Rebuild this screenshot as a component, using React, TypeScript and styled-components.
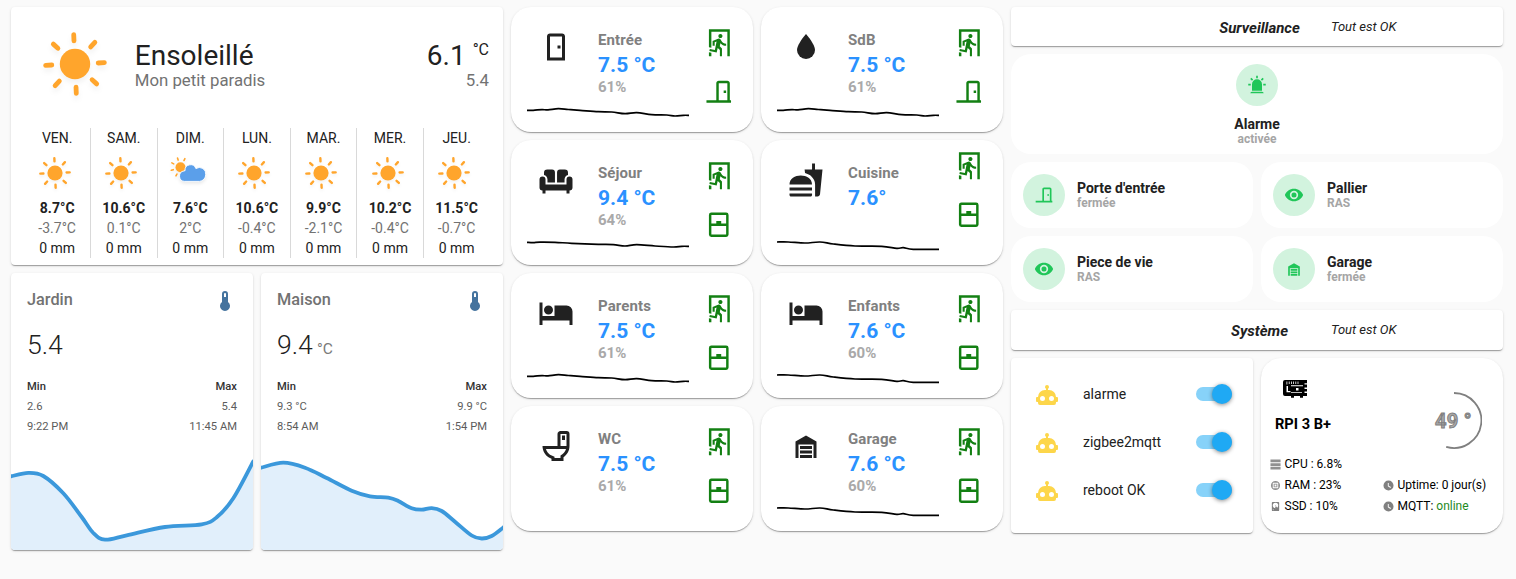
import React from "react";
import styled, { createGlobalStyle, css } from "styled-components";

const GlobalStyle = createGlobalStyle`
  * { box-sizing: border-box; }
  body {
    margin: 0;
    background: #fafafa;
    color: #212121;
    font-family: Roboto, "Noto Sans", sans-serif;
    font-size: 14px;
    -webkit-font-smoothing: antialiased;
  }
`;

/* ---------- icons ---------- */

const paths = {
  door: "M8,3C6.89,3 6,3.89 6,5V21H18V5C18,3.89 17.11,3 16,3H8M8,5H16V19H8V5M13,11V13H15V11H13Z",
  water: "M12,20A6,6 0 0,1 6,14C6,10 12,3.25 12,3.25C12,3.25 18,10 18,14A6,6 0 0,1 12,20Z",
  sofa: "M6.2,5H9.2A2,2 0 0,1 11.3,7V13.6H6.3V11.5A3.2,3.2 0 0,0 4,8.7V7.2A2.2,2.2 0 0,1 6.2,5M14.8,5H17.8A2.2,2.2 0 0,1 20,7.2V8.7A3.2,3.2 0 0,0 17.7,11.5V13.6H12.7V7A2,2 0 0,1 14.8,5M3,9.7A2,2 0 0,1 5,11.7V15H19V11.7A2,2 0 0,1 23,11.7V17A2,2 0 0,1 21,19V21H19V19H5V21H3V19A2,2 0 0,1 1,17V11.7A2,2 0 0,1 3,9.7Z",
  food: "M18.06 22.99h1.66c.84 0 1.53-.64 1.63-1.46L23 5.05h-5V1h-1.97v4.05h-4.97l.3 2.34c1.71.47 3.31 1.32 4.27 2.26 1.44 1.42 2.43 2.89 2.43 5.29v8.05zM1 21.99V21h15.03v.99c0 .55-.45 1-1.01 1H2.01c-.56 0-1.01-.45-1.01-1zm15.03-7c0-8-15.03-8-15.03 0h15.03zM1.02 17h15v2h-15z",
  bed: "M19,7H11V14H3V5H1V20H3V17H21V20H23V11A4,4 0 0,0 19,7M7,13A3,3 0 0,0 10,10A3,3 0 0,0 7,7A3,3 0 0,0 4,10A3,3 0 0,0 7,13Z",
  toilet: "M9,22H17V19.5C19.41,17.87 21,15.12 21,12V4A2,2 0 0,0 19,2H15C13.89,2 13,2.9 13,4V12H3C3,15.09 4.6,17.9 7,19.5L9,20.5V22M15,4H19V12H15V4M16,5V8H18V5H16M5.3,14H18.7C18.1,15.9 16.8,17.4 15,18.3V20H11V19.2L8,17.8C6.7,16.9 5.8,15.6 5.3,14Z",
  garage: "M19,20H17V11H7V20H5V9L12,5L19,9V20M8,12H16V14H8V12M8,15H16V17H8V15M16,18V20H8V18H16Z",
  exitRun: "M13.34,8.17C12.41,8.17 11.65,7.4 11.65,6.47A1.69,1.69 0 0,1 13.34,4.78C14.28,4.78 15.04,5.54 15.04,6.47C15.04,7.4 14.28,8.17 13.34,8.17M10.3,19.93L4.37,18.75L4.71,17.05L8.86,17.9L10.21,11.04L8.69,11.64V14.5H7V10.54L11.4,8.67L12.07,8.59C12.67,8.59 13.17,8.93 13.5,9.44L14.36,10.79C15.04,12 16.39,12.82 18,12.82V14.5C16.14,14.5 14.44,13.67 13.34,12.4L12.84,14.94L14.61,16.63V23H12.92V17.9L11.14,16.21L10.3,19.93M21,23H19V3H6V16.11L4,15.69V1H21V23M6,23H4V19.78L6,20.2V23Z",
  doorClosed: "M16,11H18V13H16V11M12,3H19C20.11,3 21,3.89 21,5V19H22V21H2V19H10V5C10,3.89 10.89,3 12,3M12,5V19H19V5H12Z",
  windowClosed: "M6,11H10V9H14V11H18V4H6V11M18,13H6V20H18V13M6,2H18A2,2 0 0,1 20,4V20A2,2 0 0,1 18,22H6A2,2 0 0,1 4,20V4A2,2 0 0,1 6,2Z",
  thermometer: "M15,13V5A3,3 0 0,0 9,5V13A5,5 0 1,0 15,13M12,4A1,1 0 0,1 13,5V8H11V5A1,1 0 0,1 12,4Z",
  alarm: "M6,6.9L3.87,4.78L5.28,3.37L7.4,5.5L6,6.9M13,1V4H11V1H13M20.13,4.78L18,6.9L16.6,5.5L18.72,3.37L20.13,4.78M4.5,10.5V12.5H1.5V10.5H4.5M19.5,10.5H22.5V12.5H19.5V10.5M6,20H18A2,2 0 0,1 20,22H4A2,2 0 0,1 6,20M12,5A6,6 0 0,1 18,11V19H6V11A6,6 0 0,1 12,5Z",
  eye: "M12,9A3,3 0 0,0 9,12A3,3 0 0,0 12,15A3,3 0 0,0 15,12A3,3 0 0,0 12,9M12,17A5,5 0 0,1 7,12A5,5 0 0,1 12,7A5,5 0 0,1 17,12A5,5 0 0,1 12,17M12,4.5C7,4.5 2.73,7.61 1,12C2.73,16.39 7,19.5 12,19.5C17,19.5 21.27,16.39 23,12C21.27,7.61 17,4.5 12,4.5Z",
  robot: "M12,2A2,2 0 0,1 14,4C14,4.74 13.6,5.39 13,5.73V7H14A7,7 0 0,1 21,14H22A1,1 0 0,1 23,15V18A1,1 0 0,1 22,19H21V20A2,2 0 0,1 19,22H5A2,2 0 0,1 3,20V19H2A1,1 0 0,1 1,18V15A1,1 0 0,1 2,14H3A7,7 0 0,1 10,7H11V5.73C10.4,5.39 10,4.74 10,4A2,2 0 0,1 12,2M7.5,13A2.5,2.5 0 0,0 5,15.5A2.5,2.5 0 0,0 7.5,18A2.5,2.5 0 0,0 10,15.5A2.5,2.5 0 0,0 7.5,13M16.5,13A2.5,2.5 0 0,0 14,15.5A2.5,2.5 0 0,0 16.5,18A2.5,2.5 0 0,0 19,15.5A2.5,2.5 0 0,0 16.5,13Z",
  board: "M2,3H24V6.2H21.5V7.6H24V10.4H21.5V12H24V14.6H21.5V16H24V19H20V20.7H17V19H11V20.7H8V19H2A2,2 0 0,1 0,17V5A2,2 0 0,1 2,3M3.5,4.5V7.5H4.3V4.5H3.5M5.8,4.5V7H6.6V4.5H5.8M8,4.5V7H8.8V4.5H8M10.2,4.5V7H11V4.5H10.2M12.4,4.5V7H13.2V4.5H12.4M14.6,4.5V7H15.4V4.5H14.6M3.5,9V15.2H7.5V14H5V9H3.5M8,8.3V9.2H20V8.3H8M13,11V13.5H15.5V11H13M8,15.3V16H19V15.3H8Z",
  server: "M1,1H23V7H1V1M1,9H23V15H1V9M1,17H23V23H1V17Z",
  chip: "M12,2A10,10 0 1,0 22,12A10,10 0 0,0 12,2M7,6H17A1,1 0 0,1 18,7V17A1,1 0 0,1 17,18H7A1,1 0 0,1 6,17V7A1,1 0 0,1 7,6M8,8V16H16V8H8M10,10H14V14H10V10Z",
  harddisk: "M6,2H18A2,2 0 0,1 20,4V20A2,2 0 0,1 18,22H6A2,2 0 0,1 4,20V4A2,2 0 0,1 6,2M12,4A6,6 0 0,0 6,10C6,13.31 8.69,16 12.1,16L11.22,13.77C10.95,13.29 11.11,12.68 11.59,12.4L12.45,11.9C12.93,11.63 13.54,11.79 13.82,12.27L15.74,14.69C17.12,13.59 18,11.9 18,10A6,6 0 0,0 12,4M12,9A1,1 0 0,1 13,10A1,1 0 0,1 12,11A1,1 0 0,1 11,10A1,1 0 0,1 12,9M7,18A1,1 0 0,0 6,19A1,1 0 0,0 7,20A1,1 0 0,0 8,19A1,1 0 0,0 7,18Z",
  clock: "M12,1A11,11 0 0,0 1,12A11,11 0 0,0 12,23A11,11 0 0,0 23,12A11,11 0 0,0 12,1M16.2,17.2L10.5,13.5V6.5H12.5V12.5L17.5,15.5L16.2,17.2Z",
};

type IconName = keyof typeof paths;

const IconSvg = styled.svg<{ $size: number; $color?: string }>`
  display: block;
  flex: none;
  width: ${(p) => p.$size}px;
  height: ${(p) => p.$size}px;
  fill: ${(p) => p.$color ?? "currentColor"};
`;

const Icon = ({ name, size = 24, color }: { name: IconName; size?: number; color?: string }) => (
  <IconSvg viewBox="0 0 24 24" $size={size} $color={color}>
    <path fillRule={name === "board" ? "evenodd" : undefined} d={paths[name]} />
  </IconSvg>
);

/* ---------- surfaces ---------- */

const Page = styled.main`
  display: grid;
  grid-template-columns: 492px 492px 492px;
  column-gap: 8px;
  align-items: start;
  min-height: 100vh;
  padding: 7px 13px 0 11px;
`;

const Column = styled.div`
  display: flex;
  flex-direction: column;
  gap: 8px;
`;

const Pair = styled.div`
  display: grid;
  grid-template-columns: 242px 242px;
  gap: 8px;
`;

const Card = styled.section<{ $round?: boolean; $flat?: boolean }>`
  background: #fff;
  border-radius: ${(p) => (p.$round || p.$flat ? 20 : 4)}px;
  overflow: hidden;
  ${(p) =>
    !p.$flat &&
    css`
      box-shadow: 0 2px 1px -1px rgba(0, 0, 0, 0.2), 0 1px 1px 0 rgba(0, 0, 0, 0.14),
        0 1px 3px 0 rgba(0, 0, 0, 0.12);
    `}
`;

/* ---------- weather ---------- */

const WeatherCard = styled(Card)`
  height: 258px;
  padding: 0 12.6px 0 13.4px;
`;

const WeatherHead = styled.header`
  display: flex;
  height: 121px;
  padding: 25px 1.4px 0 18.4px;
`;

const WeatherTitle = styled.div`
  margin-left: 28px;
  flex: 1;
`;

const BigText = styled.div`
  font-size: 28px;
  line-height: 48px;
  display: flex;
  justify-content: flex-end;
`;

const Condition = styled(BigText)`
  justify-content: flex-start;
`;

const Unit = styled.span`
  font-size: 16px;
  line-height: 36px;
  margin-left: 7px;
`;

const SubText = styled.div`
  font-size: 16.8px;
  line-height: 0;
  color: #727272;
  text-align: right;
`;

const Place = styled(SubText)`
  text-align: left;
`;

const SunSvg = styled.svg<{ $size: number }>`
  display: block;
  flex: none;
  overflow: visible;
  width: ${(p) => p.$size}px;
  height: ${(p) => p.$size}px;
  filter: drop-shadow(0 ${(p) => p.$size / 16}px ${(p) => p.$size / 22}px rgba(0, 0, 0, 0.05));
`;

const Sun = ({ size }: { size: number }) => (
  <SunSvg viewBox="-32 -32 64 64" $size={size}>
    <circle r="15.2" fill="#ffa52c" />
    <g stroke="#ffa52c" strokeWidth="4.8" strokeLinecap="round" transform="rotate(-2.5)">
      {[0, 45, 90, 135, 180, 225, 270, 315].map((a) => (
        <line key={a} x1="0" y1="-29.4" x2="0" y2="-23.2" transform={`rotate(${a})`} />
      ))}
    </g>
  </SunSvg>
);

const CloudSvg = styled.svg`
  display: block;
  overflow: visible;
  width: 36px;
  height: 26px;
  filter: drop-shadow(0 2px 1.5px rgba(0, 0, 0, 0.08));
`;

const CloudySun = () => (
  <CloudSvg viewBox="0 0 36 26">
    <g transform="translate(10.5 10.3)">
      <circle r="5" fill="#ffa52c" />
      <g stroke="#ffa52c" strokeWidth="1.6" strokeLinecap="round">
        {[-152, -108, -63, -18, 27].map((a) => (
          <line key={a} x1="0" y1="-9.7" x2="0" y2="-7.6" transform={`rotate(${a})`} />
        ))}
      </g>
    </g>
    <path
      d="M14.2 24.4a5.3 5.3 0 0 1-.2-10.5 5 5 0 0 1 1-.1 5.6 5.6 0 0 1 10.9-2.2 6.3 6.3 0 0 1 9.8 6.1 6.7 6.7 0 0 1-6.2 6.7z"
      fill="#5b9fea"
      stroke="#fff"
      strokeWidth="0.9"
    />
  </CloudSvg>
);

const Forecast = styled.div`
  display: grid;
  grid-template-columns: repeat(7, 1fr);
  height: 130px;
`;

const Day = styled.div`
  display: flex;
  flex-direction: column;
  align-items: center;
  line-height: 20px;
  border-right: 1px solid #d9d9d9;
  &:last-child {
    border-color: transparent;
  }
`;

const DayIcon = styled.div`
  height: 50px;
  padding: 9px 5px 0 0;
`;

const High = styled.strong`
  font-weight: 700;
`;

const Low = styled.span`
  color: #727272;
`;

const days = [
  { day: "VEN.", high: "8.7°C", low: "-3.7°C" },
  { day: "SAM.", high: "10.6°C", low: "0.1°C" },
  { day: "DIM.", high: "7.6°C", low: "2°C", cloudy: true },
  { day: "LUN.", high: "10.6°C", low: "-0.4°C" },
  { day: "MAR.", high: "9.9°C", low: "-2.1°C" },
  { day: "MER.", high: "10.2°C", low: "-0.4°C" },
  { day: "JEU.", high: "11.5°C", low: "-0.7°C" },
];

const Weather = () => (
  <WeatherCard>
    <WeatherHead>
      <Sun size={64} />
      <WeatherTitle>
        <Condition>Ensoleillé</Condition>
        <Place>Mon petit paradis</Place>
      </WeatherTitle>
      <div>
        <BigText>
          6.1<Unit>°C</Unit>
        </BigText>
        <SubText>5.4</SubText>
      </div>
    </WeatherHead>
    <Forecast>
      {days.map((d) => (
        <Day key={d.day}>
          <span>{d.day}</span>
          <DayIcon>{d.cloudy ? <CloudySun /> : <Sun size={32} />}</DayIcon>
          <High>{d.high}</High>
          <Low>{d.low}</Low>
          <span>0 mm</span>
        </Day>
      ))}
    </Forecast>
  </WeatherCard>
);

/* ---------- graphs ---------- */

type Point = [number, number];

const smooth = (pts: Point[]) =>
  pts.reduce((d, p, i) => {
    if (i === 0) return `M${p[0]},${p[1]}`;
    const a = pts[i - 2] ?? pts[i - 1];
    const b = pts[i - 1];
    const c = pts[i + 1] ?? p;
    return `${d}C${b[0] + (p[0] - a[0]) / 6},${b[1] + (p[1] - a[1]) / 6} ${p[0] - (c[0] - b[0]) / 6},${
      p[1] - (c[1] - b[1]) / 6
    } ${p[0]},${p[1]}`;
  }, "");

const GraphCard = styled(Card)`
  display: flex;
  flex-direction: column;
  height: 277px;
`;

const GraphHead = styled.header`
  display: flex;
  justify-content: space-between;
  padding: 16px 16px 0;
  height: 52px;
  font-size: 16.3px;
  font-weight: 500;
  line-height: 21px;
  color: #727272;
`;

const GraphValue = styled.div`
  padding-left: 16px;
  height: 52px;
  font-size: 26.6px;
  font-weight: 300;
  line-height: 40px;
`;

const GraphUnit = styled.span`
  margin-left: 4px;
  font-size: 15.5px;
  font-weight: 400;
  color: #7a7a7a;
`;

const Extremes = styled.div`
  display: flex;
  justify-content: space-between;
  padding: 0 16px;
  height: 73px;
  font-size: 11.2px;
  line-height: 20px;
  color: #5c5c5c;
`;

const Extreme = styled.div<{ $end?: boolean }>`
  display: flex;
  flex-direction: column;
  align-items: ${(p) => (p.$end ? "flex-end" : "flex-start")};
`;

const ExtremeLabel = styled.span`
  font-weight: 500;
  color: #333;
`;

const GraphSvg = styled.svg`
  display: block;
  width: 242px;
  height: 100px;
`;

type GraphProps = {
  name: string;
  value: string;
  unit?: string;
  min: [string, string];
  max: [string, string];
  points: Point[];
};

const Graph = ({ name, value, unit, min, max, points }: GraphProps) => (
  <GraphCard>
    <GraphHead>
      {name}
      <Icon name="thermometer" color="#44739e" />
    </GraphHead>
    <GraphValue>
      {value}
      {unit && <GraphUnit>{unit}</GraphUnit>}
    </GraphValue>
    <Extremes>
      <Extreme>
        <ExtremeLabel>Min</ExtremeLabel>
        <span>{min[0]}</span>
        <span>{min[1]}</span>
      </Extreme>
      <Extreme $end>
        <ExtremeLabel>Max</ExtremeLabel>
        <span>{max[0]}</span>
        <span>{max[1]}</span>
      </Extreme>
    </Extremes>
    <GraphSvg viewBox="0 0 242 100">
      <path d={`${smooth(points)}V100H0Z`} fill="#e1effb" />
      <path d={smooth(points)} fill="none" stroke="#3b98db" strokeWidth="3.8" strokeLinecap="square" />
    </GraphSvg>
  </GraphCard>
);

const jardin: Point[] = [
  [0, 26.3], [17.3, 22.9], [32.3, 26], [52.3, 43.3], [70.7, 67], [82.3, 83], [94, 89.7],
  [115.7, 85.3], [154, 77], [190.7, 74.3], [205.7, 67.3], [222.3, 48.3], [242, 12],
];

const maison: Point[] = [
  [0, 17.7], [22.3, 12.7], [44, 17.7], [65.7, 28], [90.7, 40.7], [109, 46.3], [127.3, 47.7],
  [137.3, 51], [150.7, 58.3], [160.7, 59.7], [170.7, 58.1], [180.7, 61], [194, 71.7],
  [210.7, 85.5], [220.7, 88.5], [230.7, 86], [242, 77.7],
];

/* ---------- rooms ---------- */

const RoomCard = styled(Card)`
  display: flex;
  justify-content: space-between;
  height: 125px;
  padding: 0 20px 0 16px;
`;

const RoomMain = styled.div`
  display: flex;
  flex-direction: column;
  padding-top: 22px;
`;

const RoomTop = styled.div`
  display: flex;
  gap: 24px;
  height: 78px;
  padding-left: 11px;
`;

const RoomText = styled.div`
  display: flex;
  flex-direction: column;
  padding-top: 1px;
  font-weight: 700;
`;

const RoomName = styled.span`
  font-size: 15px;
  line-height: 20px;
  letter-spacing: 0.1px;
  color: #808080;
`;

const RoomTemp = styled.span`
  font-size: 21px;
  line-height: 30px;
  color: #2a91ff;
`;

const RoomHumidity = styled.span`
  font-size: 15px;
  line-height: 14px;
  color: #a9a9a9;
`;

const Spark = styled.svg`
  display: block;
  width: 162px;
  height: 20px;
  overflow: visible;
`;

const RoomStatus = styled.div<{ $raised?: boolean }>`
  display: flex;
  flex-direction: column;
  gap: 19.5px;
  padding-top: ${(p) => (p.$raised ? 11 : 21)}px;
  color: #138013;
`;

const sparkA: Point[] = [
  [0, 3.3], [6.3, 3.3], [15, 2.6], [21, 2.9], [31.3, 1.7], [41.3, 2.5], [53, 3.3], [71.3, 4.7],
  [84.7, 5], [98, 6.7], [109.7, 5.7], [124.7, 7.7], [139.7, 8], [148, 9], [156.3, 8.3], [162, 8.3],
];
const sparkB: Point[] = [
  [0, 2.3], [6.3, 2.6], [13, 2.1], [28, 2.3], [44.7, 3.3], [71.3, 4.3], [86.3, 4.7], [98, 6],
  [109.7, 4.7], [128, 6], [146.3, 7], [154.7, 6.3], [162, 6.3],
];
const sparkC: Point[] = [
  [0, 2], [11.3, 2], [28, 3], [43, 2], [56.3, 4], [78, 6], [104.7, 6.3], [119.7, 8.3],
  [126.3, 7.7], [136.3, 9.3], [162, 9.3],
];

type Room = {
  name: string;
  icon: IconName;
  temp: string;
  humidity?: string;
  opening: IconName;
  spark?: Point[];
  raised?: boolean;
};

const rooms: Room[] = [
  { name: "Entrée", icon: "door", temp: "7.5 °C", humidity: "61%", opening: "doorClosed", spark: sparkA },
  { name: "SdB", icon: "water", temp: "7.5 °C", humidity: "61%", opening: "doorClosed", spark: sparkA },
  { name: "Séjour", icon: "sofa", temp: "9.4 °C", humidity: "64%", opening: "windowClosed", spark: sparkB },
  { name: "Cuisine", icon: "food", temp: "7.6°", opening: "windowClosed", spark: sparkC, raised: true },
  { name: "Parents", icon: "bed", temp: "7.5 °C", humidity: "61%", opening: "windowClosed", spark: sparkA },
  { name: "Enfants", icon: "bed", temp: "7.6 °C", humidity: "60%", opening: "windowClosed", spark: sparkC },
  { name: "WC", icon: "toilet", temp: "7.5 °C", humidity: "61%", opening: "windowClosed" },
  { name: "Garage", icon: "garage", temp: "7.6 °C", humidity: "60%", opening: "windowClosed", spark: sparkC },
];

const RoomTile = ({ room }: { room: Room }) => (
  <RoomCard $round>
    <RoomMain>
      <RoomTop>
        <Icon name={room.icon} size={36} />
        <RoomText>
          <RoomName>{room.name}</RoomName>
          <RoomTemp>{room.temp}</RoomTemp>
          {room.humidity && <RoomHumidity>{room.humidity}</RoomHumidity>}
        </RoomText>
      </RoomTop>
      {room.spark && (
        <Spark viewBox="0 0 162 20">
          <path d={smooth(room.spark)} fill="none" stroke="#000" strokeWidth="1.7" />
        </Spark>
      )}
    </RoomMain>
    <RoomStatus $raised={room.raised}>
      <Icon name="exitRun" size={29.5} />
      <Icon name={room.opening} size={29.5} />
    </RoomStatus>
  </RoomCard>
);

/* ---------- security ---------- */

const Banner = styled(Card)<{ $height: number }>`
  display: grid;
  grid-template-columns: 198px 101px 1fr;
  height: ${(p) => p.$height}px;
  padding-top: 10px;
  font-style: italic;
  line-height: 22px;
`;

const BannerTitle = styled.strong`
  grid-column: 2;
  font-size: 15px;
  font-weight: 700;
  text-align: center;
`;

const BannerNote = styled.span`
  padding-left: 21px;
  font-size: 13px;
  line-height: 19px;
`;

const AlarmCard = styled(Card)`
  display: flex;
  flex-direction: column;
  align-items: center;
  height: 100px;
  padding-top: 10px;
`;

const SensorCard = styled(Card)`
  display: flex;
  align-items: center;
  gap: 12px;
  height: 66px;
  padding-left: 12px;
`;

const Badge = styled.div`
  display: flex;
  align-items: center;
  justify-content: center;
  flex: none;
  width: 42px;
  height: 42px;
  border-radius: 50%;
  background: #d2f3de;
  color: #20c659;
`;

const SensorText = styled.div<{ $center?: boolean }>`
  display: flex;
  flex-direction: column;
  margin-top: ${(p) => (p.$center ? 10 : 0)}px;
  text-align: ${(p) => (p.$center ? "center" : "left")};
`;

const SensorName = styled.strong`
  font-size: 14px;
  font-weight: 700;
  line-height: 16px;
`;

const SensorState = styled.span`
  font-size: 12px;
  font-weight: 700;
  line-height: 14px;
  color: #a5a5a5;
`;

const sensors: { name: string; state: string; icon: IconName }[] = [
  { name: "Porte d'entrée", state: "fermée", icon: "doorClosed" },
  { name: "Pallier", state: "RAS", icon: "eye" },
  { name: "Piece de vie", state: "RAS", icon: "eye" },
  { name: "Garage", state: "fermée", icon: "garage" },
];

/* ---------- system ---------- */

const AutomationCard = styled(Card)`
  display: flex;
  flex-direction: column;
  gap: 8px;
  height: 175px;
  padding: 16px;
`;

const AutomationRow = styled.div`
  display: flex;
  align-items: center;
  height: 40px;
  padding: 0 5px 0 8px;
  & > svg {
    margin-top: 2px;
  }
`;

const AutomationName = styled.span`
  flex: 1;
  padding-left: 24px;
`;

const Toggle = styled.div`
  display: flex;
  align-items: center;
  justify-content: flex-end;
  width: 36px;
  height: 14px;
  border-radius: 7px;
  background: #87d2f9;
`;

const Thumb = styled.div`
  flex: none;
  width: 20px;
  height: 20px;
  border-radius: 50%;
  background: #1fa9f4;
  box-shadow: 0 1px 4px rgba(0, 0, 0, 0.45);
`;

const PiCard = styled(Card)`
  height: 175px;
  padding: 19px 0 0 10px;
  color: #000;
`;

const PiHead = styled.div`
  display: flex;
  justify-content: space-between;
  height: 76px;
  padding-right: 21px;
`;

const PiIdentity = styled.div`
  padding-left: 4px;
  & > svg {
    margin-left: 8px;
  }
`;

const PiName = styled.strong`
  display: block;
  margin-top: 14px;
  font-size: 14.6px;
  font-weight: 700;
  line-height: 18px;
`;

const Gauge = styled.div`
  display: grid;
  width: 62px;
  margin-top: 14px;
  height: 58px;
  & > * {
    grid-area: 1 / 1;
  }
`;

const GaugeArc = styled.svg`
  display: block;
  width: 62px;
  height: 58px;
`;

const GaugeText = styled.span`
  padding-left: 15px;
  font-size: 20px;
  font-weight: 700;
  line-height: 60px;
  letter-spacing: 0.3px;
  color: #aaa;
  -webkit-text-stroke: 1px #808080;
`;

const Stats = styled.div`
  display: grid;
  grid-template-columns: 113px 1fr;
  grid-auto-rows: 21px;
`;

const Stat = styled.span<{ $col: number }>`
  grid-column: ${(p) => p.$col};
  display: flex;
  align-items: center;
  font-size: 12px;
  white-space: pre;
  & > svg {
    margin: 1px 3.5px 0 -1px;
  }
`;

const Online = styled.span`
  color: #1e8a1e;
`;

export default function App() {
  return (
    <>
      <GlobalStyle />
      <Page>
        <Column>
          <Weather />
          <Pair>
            <Graph name="Jardin" value="5.4" min={["2.6", "9:22 PM"]} max={["5.4", "11:45 AM"]} points={jardin} />
            <Graph
              name="Maison"
              value="9.4"
              unit="°C"
              min={["9.3 °C", "8:54 AM"]}
              max={["9.9 °C", "1:54 PM"]}
              points={maison}
            />
          </Pair>
        </Column>

        <Pair>
          {rooms.map((room) => (
            <RoomTile key={room.name} room={room} />
          ))}
        </Pair>

        <Column>
          <Banner $height={39}>
            <BannerTitle>Surveillance</BannerTitle>
            <BannerNote>Tout est OK</BannerNote>
          </Banner>
          <AlarmCard $flat>
            <Badge>
              <Icon name="alarm" size={20} />
            </Badge>
            <SensorText $center>
              <SensorName>Alarme</SensorName>
              <SensorState>activée</SensorState>
            </SensorText>
          </AlarmCard>
          <Pair>
            {sensors.map((s) => (
              <SensorCard key={s.name} $flat>
                <Badge>
                  <Icon name={s.icon} size={20} />
                </Badge>
                <SensorText>
                  <SensorName>{s.name}</SensorName>
                  <SensorState>{s.state}</SensorState>
                </SensorText>
              </SensorCard>
            ))}
          </Pair>
          <Banner $height={40}>
            <BannerTitle>Système</BannerTitle>
            <BannerNote>Tout est OK</BannerNote>
          </Banner>
          <Pair>
            <AutomationCard>
              {["alarme", "zigbee2mqtt", "reboot OK"].map((name) => (
                <AutomationRow key={name}>
                  <Icon name="robot" color="#fdd64a" />
                  <AutomationName>{name}</AutomationName>
                  <Toggle>
                    <Thumb />
                  </Toggle>
                </AutomationRow>
              ))}
            </AutomationCard>
            <PiCard $round>
              <PiHead>
                <PiIdentity>
                  <Icon name="board" size={24} />
                  <PiName>RPI 3 B+</PiName>
                </PiIdentity>
                <Gauge>
                  <GaugeArc viewBox="0 0 62 58">
                    <path d="M34 2A27.5 27.5 0 1 1 26.2 55.9" fill="none" stroke="#808080" strokeWidth="1.8" />
                  </GaugeArc>
                  <GaugeText>49 °</GaugeText>
                </Gauge>
              </PiHead>
              <Stats>
                <Stat $col={1}>
                  <Icon name="server" size={11} color="#909090" />
                  CPU : 6.8%
                </Stat>
                <Stat $col={1}>
                  <Icon name="chip" size={11} color="#909090" />
                  RAM : 23%
                </Stat>
                <Stat $col={2}>
                  <Icon name="clock" size={11} color="#808080" />
                  Uptime: 0 jour(s)
                </Stat>
                <Stat $col={1}>
                  <Icon name="harddisk" size={11} color="#808080" />
                  SSD : 10%
                </Stat>
                <Stat $col={2}>
                  <Icon name="clock" size={11} color="#808080" />
                  MQTT: <Online>online</Online>
                </Stat>
              </Stats>
            </PiCard>
          </Pair>
        </Column>
      </Page>
    </>
  );
}
